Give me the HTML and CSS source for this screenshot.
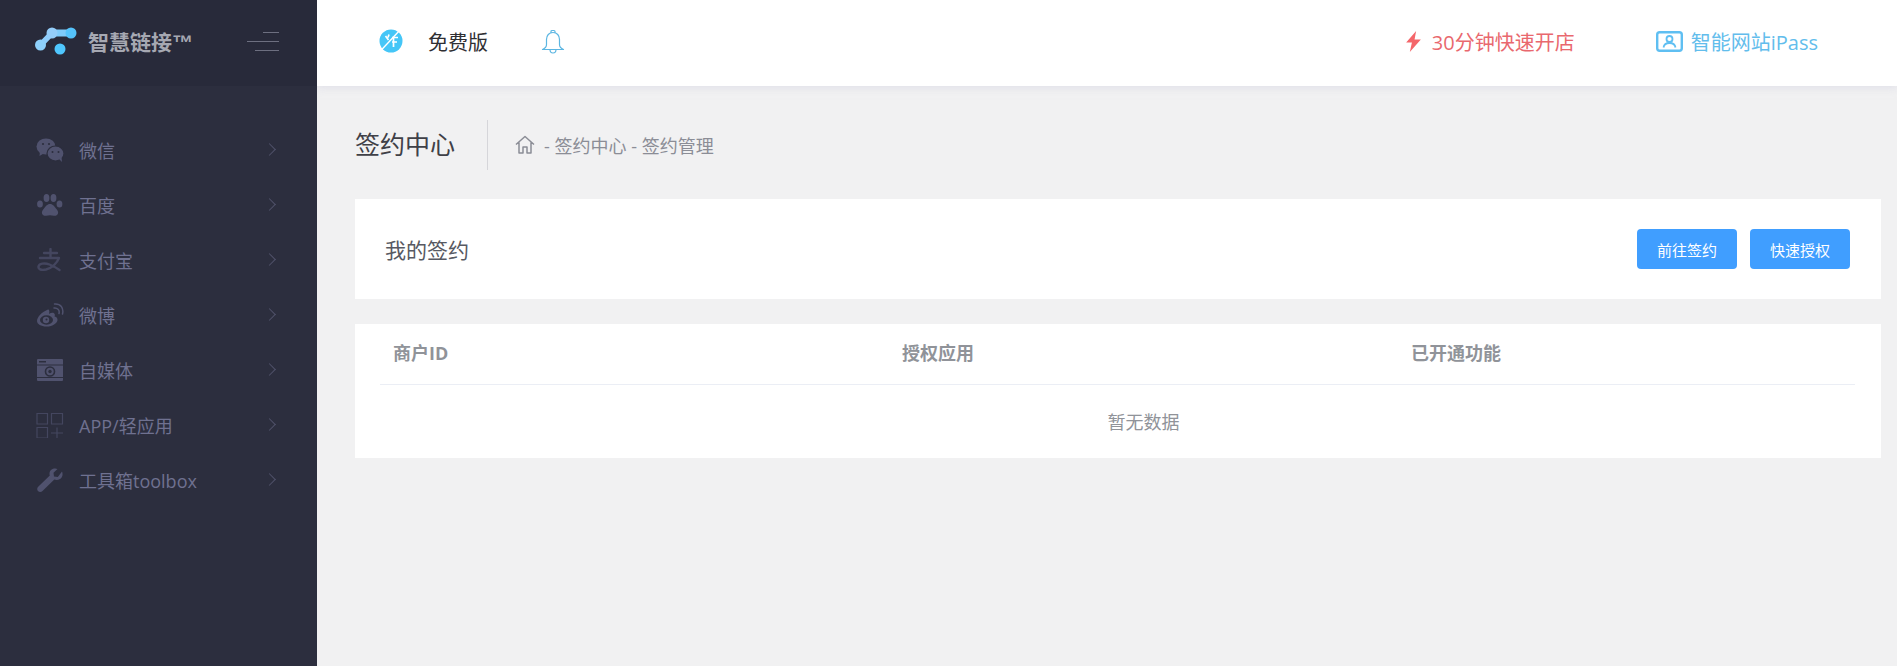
FILE: index.html
```html
<!DOCTYPE html>
<html lang="en">
<head>
  <meta charset="UTF-8">
  <meta name="viewport" content="width=device-width, initial-scale=1.0">
  <title>签约管理</title>
  <link rel="stylesheet" href="styles.css">
</head>
<body>

<div class="app">
  <aside class="sidebar">
    <div class="brand">
      <svg class="brand-logo" width="42" height="28" viewBox="0 0 42 28">
        <path d="M5.500 18 L17 6" fill="none" stroke="#8fcdfb" stroke-width="5.500" stroke-linecap="round"/>
        <path d="M17 6 L36 6" fill="none" stroke="#7fcbfa" stroke-width="7" stroke-linecap="round"/>
        <circle cx="5.500" cy="18" r="5.500" fill="#8ed0fb"/>
        <circle cx="17" cy="6" r="5.500" fill="#94cdf9"/>
        <circle cx="36" cy="6" r="5.500" fill="#55c3fb"/>
        <circle cx="25" cy="22" r="5.500" fill="#4fc6fd"/>
      </svg>
      <span class="brand-name">智慧链接™</span>
      <div class="burger">
        <i class="burger-top"></i>
        <i class="burger-mid"></i>
        <i class="burger-bot"></i>
      </div>
    </div>

    <nav class="menu">
      <a class="menu-item">
        <svg class="menu-icon" viewBox="0 0 28 24" width="28" height="24">
          <ellipse cx="10" cy="8.500" rx="9.500" ry="8" fill="#50526e"/>
          <path d="M4 13l-.5 5 5-3z" fill="#50526e"/>
          <ellipse cx="19.500" cy="15.500" rx="8.500" ry="7.500" fill="#50526e" stroke="#2c2e3e" stroke-width="1.200"/>
          <path d="M23 21l3 3-.5-5z" fill="#50526e"/>
          <circle cx="7" cy="6" r="1.100" fill="#2c2e3e"/>
          <circle cx="13" cy="6" r="1.100" fill="#2c2e3e"/>
          <circle cx="16.500" cy="14" r="1" fill="#2c2e3e"/>
          <circle cx="22.500" cy="14" r="1" fill="#2c2e3e"/>
        </svg>
        <span class="menu-text">微信</span>
        <span class="chevron"></span>
      </a>
      <a class="menu-item">
        <svg class="menu-icon" viewBox="0 0 28 24" width="28" height="24">
          <ellipse cx="4" cy="11" rx="2.900" ry="3.600" fill="#50526e"/>
          <ellipse cx="10.500" cy="5" rx="2.900" ry="4" fill="#50526e"/>
          <ellipse cx="17.500" cy="5" rx="2.900" ry="4" fill="#50526e"/>
          <ellipse cx="23.500" cy="11" rx="2.900" ry="3.600" fill="#50526e"/>
          <path d="M14 11c-3 0-4.500 2.500-6 4.500-1.500 1.800-2.500 3-2 5C6.500 22.500 8.500 23 10 22.800c1.500-.2 2.700-.6 4-.6s2.500.4 4 .6c1.500.2 3.500-.3 4-2.300.5-2-.5-3.200-2-5-1.500-2-3-4.500-6-4.500z" fill="#50526e"/>
        </svg>
        <span class="menu-text">百度</span>
        <span class="chevron"></span>
      </a>
      <a class="menu-item">
        <svg class="menu-icon" viewBox="0 0 28 24" width="28" height="24">
          <path d="M8 5h13M14.500 1v9M4 10h19c-2 5-7 10-13 11.500-4.500 1-8 0-7.500-3 .5-3 6-4 11-2 4 1.500 7 3.500 10 5.500" fill="none" stroke="#44465f" stroke-width="2.400" stroke-linecap="round" stroke-linejoin="round"/>
        </svg>
        <span class="menu-text">支付宝</span>
        <span class="chevron"></span>
      </a>
      <a class="menu-item">
        <svg class="menu-icon" viewBox="0 0 28 24" width="28" height="24">
          <path d="M11 7c-5 2-10 7-10 11 0 3 4 5.500 9.500 5.500 6.500 0 11-3.600 11-6.800 0-2.200-2-2.800-3-3.100.5-1.300.6-2.700-.5-3.400-1.300-.7-3.500-.2-5 .7 .6-1.700.5-3.500-.5-4.300C11.800 6.100 11.400 6.800 11 7z" fill="#50526e"/>
          <ellipse cx="10.500" cy="17" rx="6.500" ry="4.700" fill="#2c2e3e"/>
          <circle cx="10" cy="17" r="3.200" fill="#50526e"/>
          <circle cx="10.500" cy="16.500" r="1" fill="#2c2e3e"/>
          <path d="M18 5c3-.5 6 2 5 5.500M18.500 1c6-.5 9.500 4 8 10" fill="none" stroke="#50526e" stroke-width="1.500" stroke-linecap="round"/>
        </svg>
        <span class="menu-text">微博</span>
        <span class="chevron"></span>
      </a>
      <a class="menu-item">
        <svg class="menu-icon" viewBox="0 0 28 24" width="28" height="24">
          <path d="M2 1h24a1 1 0 0 1 1 1v20a1 1 0 0 1-1 1H2a1 1 0 0 1-1-1V2a1 1 0 0 1 1-1z" fill="#50526e"/>
          <path d="M3 3h7v1.500H3zM1 6.500h26v1H1zM1 19h26v1H1z" fill="#2c2e3e"/>
          <circle cx="14" cy="13.500" r="4.500" fill="none" stroke="#2c2e3e" stroke-width="1.600"/>
          <circle cx="14" cy="13.500" r="1.700" fill="#2c2e3e"/>
        </svg>
        <span class="menu-text">自媒体</span>
        <span class="chevron"></span>
      </a>
      <a class="menu-item">
        <svg class="menu-icon" viewBox="0 0 28 26" width="28" height="26">
          <path d="M1 1.500h10.500v10.500H1zM15.500 1.500H26.500v10.500H15.500zM1 15.500h10.500V26H1zM15 21h12M21 15.500V26" fill="none" stroke="#44465f" stroke-width="1.200"/>
        </svg>
        <span class="menu-text">APP/轻应用</span>
        <span class="chevron"></span>
      </a>
      <a class="menu-item">
        <svg class="menu-icon" viewBox="0 0 28 24" width="28" height="24">
          <path d="M26 3.500c1.300 3 .3 6-2 7.500-1.900 1.200-4 1.200-5.700.5L6.500 23c-1.500 1.400-3.500 1-4.500 0s-1.200-3 .2-4.300L13.800 7.500c-.7-2-.2-4.300 1.500-5.700C17 .4 19.500 0 21.500 1l-4 3.700.5 3.700 3.800.7z" fill="#50526e"/>
        </svg>
        <span class="menu-text">工具箱toolbox</span>
        <span class="chevron"></span>
      </a>
    </nav>
  </aside>

  <div class="main">
    <header class="topbar">
      <div class="plan">
        <svg class="plan-icon" viewBox="0 0 26 24" width="26" height="24">
          <circle cx="13" cy="12" r="11.500" fill="#45c6f7"/>
          <path d="M1.500 23 L22.500 .5" stroke="#fff" stroke-width="1.400"/>
          <path d="M14 8.500h6M15.500 8.500V18M14 13h5M7.500 7l3 4M11 5.500l-1 3" fill="none" stroke="#fff" stroke-width="1.700"/>
        </svg>
        <span class="plan-name">免费版</span>
        <svg class="bell" viewBox="0 0 24 25" width="24" height="25">
          <path d="M10 4V2.500a1 1 0 0 1 1-1h2a1 1 0 0 1 1 1V4M12 3.500c-4 0-6.500 3-6.500 7v5c0 2-1.500 4-4 5h21c-2.500-1-4-3-4-5v-5c0-4-2.500-7-6.500-7zM9 20.500c0 2.200 1.300 3.500 3 3.500s3-1.300 3-3.500" fill="none" stroke="#5cb6e2" stroke-width="1.200" stroke-linejoin="round"/>
        </svg>
      </div>
      <div class="promo">
        <a class="promo-link promo-red">
          <svg viewBox="0 0 16 20" width="17" height="21">
            <path d="M10.500 0 1 11h5.500L4.500 20 15 8H9z" fill="#f4666a"/>
          </svg>
          30分钟快速开店
        </a>
        <a class="promo-link promo-blue">
          <svg viewBox="0 0 27 21" width="27" height="21">
            <rect x="1.200" y="1.200" width="24.600" height="18.600" rx="2.500" fill="none" stroke="#5fbff2" stroke-width="2.400"/>
            <circle cx="13.500" cy="8" r="3" fill="none" stroke="#5fbff2" stroke-width="1.800"/>
            <path d="M7.500 16.500c.5-3 3-4.500 6-4.500s5.500 1.500 6 4.500" fill="none" stroke="#5fbff2" stroke-width="1.800"/>
          </svg>
          智能网站iPass
        </a>
      </div>
    </header>

    <main class="content">
      <div class="page-head">
        <h2 class="page-title">签约中心</h2>
        <div class="crumbs">
          <svg viewBox="0 0 20 19" width="20" height="19">
            <path d="M1 9.500 10 1.500l9 8M4 7.500V18h4v-6h4v6h4V7.500" fill="none" stroke="#8b8d96" stroke-width="1.500" stroke-linejoin="round"/>
          </svg>
          <span>- 签约中心 - 签约管理</span>
        </div>
      </div>

      <section class="card card-head">
        <h3 class="card-title">我的签约</h3>
        <div class="actions">
          <button class="btn">前往签约</button>
          <button class="btn">快速授权</button>
        </div>
      </section>

      <section class="card card-table">
        <div class="table-row">
          <div>商户ID</div>
          <div>授权应用</div>
          <div>已开通功能</div>
        </div>
        <div class="empty">暂无数据</div>
      </section>
    </main>
  </div>
</div>

</body>
</html>
```

FILE: styles.css
```css
* {
  box-sizing: border-box;
}
body {
  margin: 0;
  font-family: "Open Sans", "Noto Sans CJK SC", sans-serif;
  background-color: #f1f1f2;
  overflow: hidden;
}
a {
  text-decoration: none;
}
.app {
  display: flex;
  height: 100vh;
}

/* sidebar */
.sidebar {
  position: relative;
  z-index: 1;
  width: 317px;
  flex-shrink: 0;
  background-color: #2c2e3e;
}
.brand {
  height: 86px;
  padding: 0 38px 4px 35px;
  display: flex;
  align-items: center;
  background-color: #282a3a;
}
.brand-logo {
  flex-shrink: 0;
}
.brand-name {
  margin-left: 11px;
  font-family: "Liberation Sans", "Noto Sans CJK SC", sans-serif;
  font-size: 21px;
  font-weight: bold;
  color: #a6a8b2;
  white-space: nowrap;
}
.burger {
  margin-left: auto;
  width: 32px;
  display: flex;
  flex-direction: column;
  align-items: flex-end;
  gap: 8px;
}
.burger i {
  display: block;
  height: 1px;
  background-color: #6d6f80;
}
.burger-top {
  width: 16px;
}
.burger-mid {
  width: 32px;
}
.burger-bot {
  width: 24px;
}
.menu {
  padding: 36px 0 0 36px;
}
.menu-item {
  height: 55px;
  display: flex;
  align-items: center;
  color: #6f7190;
  font-size: 18px;
}
.menu-icon {
  flex-shrink: 0;
}
.menu-text {
  margin-left: 15px;
  white-space: nowrap;
}
.chevron {
  margin-left: auto;
  margin-right: 43px;
  width: 9px;
  height: 9px;
  border-top: 1px solid #50526a;
  border-right: 1px solid #50526a;
  transform: rotate(45deg);
}

/* top bar */
.main {
  flex: 1;
  min-width: 0;
  display: flex;
  flex-direction: column;
}
.topbar {
  height: 86px;
  flex-shrink: 0;
  padding: 0 79px 4px 61px;
  display: flex;
  align-items: center;
  justify-content: space-between;
  background: #ffffff;
  box-shadow: 0 2px 8px rgba(210, 210, 225, 0.5);
}
.plan {
  display: flex;
  align-items: center;
}
.plan-name {
  margin-left: 24px;
  font-size: 20px;
  color: #2f2f33;
}
.bell {
  margin-left: 53px;
}
.promo {
  display: flex;
  align-items: center;
  gap: 81px;
}
.promo-link {
  display: flex;
  align-items: center;
  gap: 10px;
  font-size: 20px;
}
.promo-red {
  color: #e9686e;
}
.promo-blue {
  gap: 8px;
  color: #62bdec;
}

/* content */
.content {
  flex: 1;
  padding: 0 16px 0 38px;
}
.page-head {
  height: 113px;
  padding-top: 4px;
  display: flex;
  align-items: center;
}
.page-title {
  margin: 0;
  padding-right: 32px;
  height: 50px;
  line-height: 48px;
  font-size: 25px;
  font-weight: normal;
  color: #3f4047;
  border-right: 1px solid #d6d6da;
}
.crumbs {
  margin-left: 27px;
  display: flex;
  align-items: center;
  gap: 9px;
  font-size: 18px;
  color: #8b8d96;
}
.card {
  background: #ffffff;
}
.card-head {
  height: 100px;
  padding: 0 31px 0 30px;
  display: flex;
  align-items: center;
  justify-content: space-between;
}
.card-title {
  margin: 0;
  font-size: 21px;
  font-weight: normal;
  color: #575962;
}
.actions {
  display: flex;
  gap: 13px;
}
.btn {
  width: 100px;
  height: 40px;
  padding: 0;
  background-color: #409eff;
  color: white;
  border: none;
  border-radius: 4px;
  font-family: inherit;
  font-size: 15px;
}
.card-table {
  margin-top: 25px;
  height: 134px;
  padding: 0 26px 0 25px;
}
.table-row {
  height: 61px;
  padding: 0 13px 4px;
  display: grid;
  grid-template-columns: repeat(3, 509px);
  align-items: center;
  font-size: 18px;
  font-weight: bold;
  color: #909399;
  border-bottom: 1px solid #ebeef5;
}
.empty {
  height: 73px;
  padding: 0 0 2px 52px;
  display: flex;
  align-items: center;
  justify-content: center;
  font-size: 18px;
  color: #909399;
}
```
